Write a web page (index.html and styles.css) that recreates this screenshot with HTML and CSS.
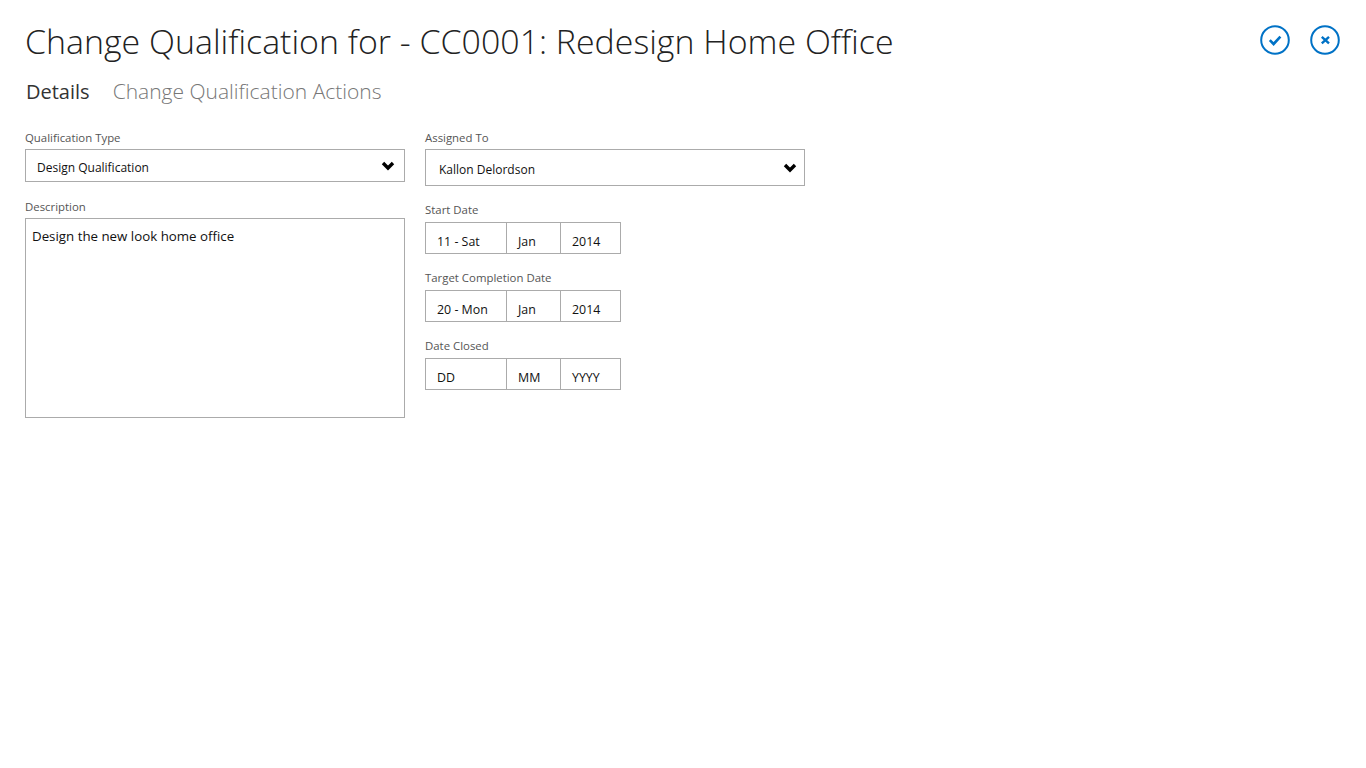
FILE: index.html
```html
<!DOCTYPE html>
<html lang="en">
<head>
  <meta charset="UTF-8">
  <title>Change Qualification</title>
  <link rel="stylesheet" href="styles.css">
</head>
<body>
  <header class="top">
    <h1>Change Qualification for - CC0001: Redesign Home Office</h1>
    <div class="actions">
      <button class="round" aria-label="Save">
        <svg width="30" height="30" viewBox="0 0 30 30"><circle cx="15" cy="15" r="13.8" fill="none" stroke="#0072c6" stroke-width="2"/><path d="M9.8 15.2l3.8 3.8 6.8-7.4" fill="none" stroke="#0072c6" stroke-width="2.6"/></svg>
      </button>
      <button class="round" aria-label="Cancel">
        <svg width="30" height="30" viewBox="0 0 30 30"><circle cx="15" cy="15" r="13.8" fill="none" stroke="#0072c6" stroke-width="2"/><path d="M11.8 11.8l7.2 6.6M19 11.8l-7.2 6.6" fill="none" stroke="#0072c6" stroke-width="2.4"/></svg>
      </button>
    </div>
  </header>

  <nav class="tabs">
    <span class="tab active">Details</span>
    <span class="tab">Change Qualification Actions</span>
  </nav>

  <main class="form">
    <section class="col">
      <label class="lbl">Qualification Type</label>
      <div class="select small">
        <span>Design Qualification</span>
        <svg class="chev" width="14" height="10" viewBox="0 0 14 10"><path d="M2 2l5 5 5-5" fill="none" stroke="#000" stroke-width="3.4"/></svg>
      </div>
      <label class="lbl second">Description</label>
      <div class="textarea">Design the new look home office</div>
    </section>

    <section class="col">
      <label class="lbl">Assigned To</label>
      <div class="select large">
        <span>Kallon Delordson</span>
        <svg class="chev" width="14" height="10" viewBox="0 0 14 10"><path d="M2 2l5 5 5-5" fill="none" stroke="#000" stroke-width="3.4"/></svg>
      </div>

      <label class="lbl date-lbl">Start Date</label>
      <div class="date">
        <span class="d">11 - Sat</span><span class="m">Jan</span><span class="y">2014</span>
      </div>

      <label class="lbl date-lbl">Target Completion Date</label>
      <div class="date">
        <span class="d">20 - Mon</span><span class="m">Jan</span><span class="y">2014</span>
      </div>

      <label class="lbl date-lbl">Date Closed</label>
      <div class="date">
        <span class="d">DD</span><span class="m">MM</span><span class="y">YYYY</span>
      </div>
    </section>
  </main>
</body>
</html>
```

FILE: styles.css
```css
* { box-sizing: border-box; }
html, body { height: 100%; }
body {
  margin: 0;
  padding: 0 26px 0 25px;
  background: #fff;
  color: #222;
  font-family: "Open Sans", "Noto Sans", sans-serif;
  overflow: hidden;
}
.top {
  display: flex;
  justify-content: space-between;
  align-items: flex-start;
  height: 72px;
}
h1 {
  margin: 0;
  padding-top: 17px;
  font-size: 33.9px;
  line-height: 48px;
  font-weight: 300;
  color: #222;
  white-space: nowrap;
}
.actions {
  display: flex;
  gap: 20px;
  padding-top: 25px;
}
.round {
  width: 30px;
  height: 30px;
  padding: 0;
  border: none;
  background: none;
  display: block;
}
.round svg { display: block; }
.tabs {
  display: flex;
  gap: 23px;
  height: 56px;
  padding-top: 5px;
  padding-left: 1px;
}
.tab {
  font-size: 21px;
  line-height: 28px;
  font-weight: 300;
  color: #777;
}
.tab.active { color: #333; font-size: 20px; line-height: 30px; font-weight: 400; }
.form {
  display: flex;
  gap: 20px;
}
.col {
  width: 380px;
}
.lbl {
  display: block;
  font-size: 11.4px;
  line-height: 19px;
  height: 21px;
  color: #555;
}
.second { margin-top: 15px; }
.date-lbl { margin-top: 14px; height: 22px; }
.select {
  display: flex;
  justify-content: space-between;
  align-items: center;
  border: 1px solid #ababab;
  font-size: 12px;
  color: #111;
}
.select.small { height: 33px; padding: 0 9px 0 11px; }
.select.large { height: 37px; padding: 0 7px 0 13px; }
.select span { padding-top: 4px; }
.chev { display: block; }
.textarea {
  height: 200px;
  border: 1px solid #ababab;
  padding: 7px 6px;
  font-size: 13.3px;
  line-height: 20px;
  color: #111;
}
.date {
  display: flex;
  width: 196px;
  height: 32px;
  border: 1px solid #ababab;
  font-size: 12.4px;
  color: #111;
}
.date span {
  padding: 9px 0 0 11px;
  line-height: 20px;
  border-left: 1px solid #ababab;
}
.date .d { width: 80px; border-left: none; }
.date .m { width: 54px; }
.date .y { width: 60px; }
```
